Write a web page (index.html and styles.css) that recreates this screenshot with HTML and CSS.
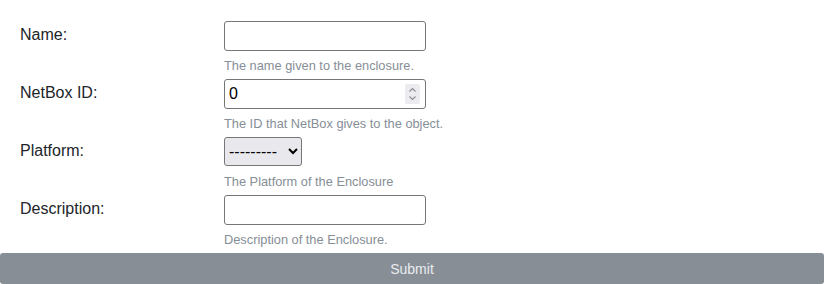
FILE: index.html
```html
<!DOCTYPE html>
<html>
<head>
<meta charset="utf-8">
<link rel="stylesheet" href="styles.css">
</head>
<body>
<form class="enclosure-form">
  <div class="fields">
    <label class="field-label" for="id_name">Name:</label>
    <div class="field-cell">
      <input class="text-input" type="text" id="id_name">
      <span class="help">The name given to the enclosure.</span>
    </div>
    <label class="field-label" for="id_netbox">NetBox ID:</label>
    <div class="field-cell">
      <div class="number-wrap">
        <input class="text-input number-input" type="number" id="id_netbox" value="0">
        <span class="spinner" aria-hidden="true">
          <svg width="15" height="20" viewBox="0 0 15 20">
            <path d="M4.5 7.5 L7.5 4.5 L10.5 7.5" fill="none" stroke="#8a8a90" stroke-width="1.1"/>
            <path d="M4.5 12.5 L7.5 15.5 L10.5 12.5" fill="none" stroke="#8a8a90" stroke-width="1.1"/>
          </svg>
        </span>
      </div>
      <span class="help">The ID that NetBox gives to the object.</span>
    </div>
    <label class="field-label" for="id_platform">Platform:</label>
    <div class="field-cell">
      <select class="select-input" id="id_platform"><option>---------</option></select>
      <span class="help">The Platform of the Enclosure</span>
    </div>
    <label class="field-label" for="id_desc">Description:</label>
    <div class="field-cell">
      <input class="text-input" type="text" id="id_desc">
      <span class="help">Description of the Enclosure.</span>
    </div>
  </div>
  <button class="submit-btn" type="submit">Submit</button>
</form>
</body>
</html>
```
FILE: styles.css
```css
html, body {
  margin: 0;
  padding: 0;
  background: #fff;
  font-family: "Liberation Sans", Arial, sans-serif;
  color: #212529;
}
.enclosure-form {
  display: flex;
  flex-direction: column;
}
.fields {
  display: grid;
  grid-template-columns: 204px auto;
  padding: 21px 0 0 20px;
  row-gap: 6px;
  align-items: start;
}
.field-label {
  font-size: 16px;
  line-height: 20px;
  padding-top: 4px;
}
.field-cell {
  display: flex;
  flex-direction: column;
  align-items: flex-start;
}
.text-input {
  box-sizing: border-box;
  width: 202px;
  height: 30px;
  border: 1px solid #767676;
  border-radius: 3px;
  padding: 1px 4px;
  font-family: "Liberation Sans", Arial, sans-serif;
  font-size: 16px;
  color: #000;
  margin: 0;
  display: block;
}
.number-wrap {
  position: relative;
}
.number-input {
  -moz-appearance: textfield;
}
.number-input::-webkit-inner-spin-button,
.number-input::-webkit-outer-spin-button {
  -webkit-appearance: none;
  margin: 0;
}
.spinner {
  position: absolute;
  top: 5px;
  right: 6px;
  width: 15px;
  height: 20px;
  background: #ececf0;
  border-radius: 2px;
  display: block;
}
.spinner svg {
  display: block;
}
.select-input {
  box-sizing: border-box;
  width: 78px;
  height: 29px;
  margin: 0 0 1px 0;
  border: 1px solid #767676;
  border-radius: 3px;
  background-color: #e9e9ed;
  font-family: "Liberation Sans", Arial, sans-serif;
  font-size: 16px;
  color: #000;
}
.help {
  margin-top: 7px;
  font-size: 12.8px;
  line-height: 15px;
  color: #868e96;
}
.submit-btn {
  margin-top: 6px;
  width: 100%;
  height: 31px;
  border: none;
  border-radius: 3px;
  background: #878e96;
  color: #e9ecef;
  font-family: "Liberation Sans", Arial, sans-serif;
  font-size: 14px;
  padding: 0;
}
```
